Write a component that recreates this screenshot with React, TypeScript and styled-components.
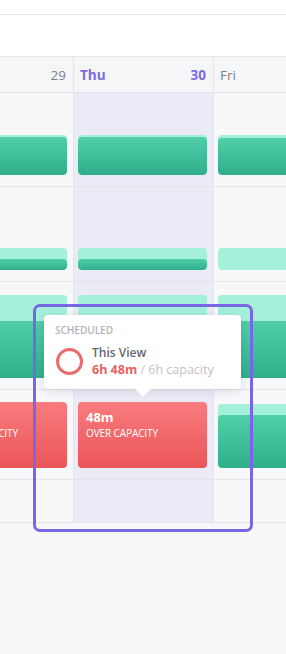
import React from "react";
import styled, { createGlobalStyle } from "styled-components";

const Global = createGlobalStyle`
  html, body { margin: 0; padding: 0; background: #f7f8fa; }
  body { font-family: "Open Sans", "Noto Sans", sans-serif; width: 286px; height: 654px; overflow: hidden; }
`;

const Page = styled.div`
  position: relative;
  width: 286px;
  height: 654px;
  overflow: hidden;
  background: #f7f8fa;
  display: flex;
  flex-direction: column;
`;

const TopStrip = styled.div`
  height: 14px;
  background: #fff;
  border-bottom: 1px solid #e6e7eb;
`;

const Toolbar = styled.div`
  height: 41px;
  background: #fff;
  border-bottom: 1px solid #e6e7eb;
`;

const Grid = styled.div`
  display: grid;
  grid-template-columns: repeat(3, 140px);
  margin-left: -66px;
  width: 420px;
`;

const Cell = styled.div<{ $today?: boolean; $h: number }>`
  box-sizing: border-box;
  height: ${(p) => p.$h}px;
  border-right: 1px solid #e4e5eb;
  border-bottom: 1px solid #e4e5eb;
  background: ${(p) => (p.$today ? "#ebebf7" : "#f7f8fa")};
  display: flex;
  flex-direction: column;
  justify-content: flex-end;
  padding: 0 6px 11px 4px;
`;

const HeadCell = styled.div<{ $today?: boolean }>`
  box-sizing: border-box;
  height: 36px;
  border-right: 1px solid #e4e5eb;
  border-bottom: 1px solid #e4e5eb;
  background: #f5f6f8;
  display: flex;
  align-items: center;
  justify-content: space-between;
  padding: 0 7px 0 6px;
  font-size: 13.5px;
  color: ${(p) => (p.$today ? "#7b6be6" : "#7d7f86")};
  font-weight: ${(p) => (p.$today ? 700 : 400)};
`;

const Bar = styled.div<{ $h: number }>`
  height: ${(p) => p.$h}px;
  border-radius: 4px;
  background: #a5f0db;
  display: flex;
  flex-direction: column;
  justify-content: flex-end;
  overflow: hidden;
`;

const Fill = styled.div<{ $h: number }>`
  height: ${(p) => p.$h}px;
  border-radius: 4px;
  background: linear-gradient(180deg, #50cfa9 0%, #2fae89 100%);
`;

const OverBar = styled.div<{ $h: number }>`
  height: ${(p) => p.$h}px;
  border-radius: 4px;
  background: linear-gradient(180deg, #f87c7e 0%, #ea5558 100%);
  color: #fff;
  padding: 6px 8px;
  box-sizing: border-box;
  display: flex;
  flex-direction: column;
  white-space: nowrap;
`;

const OverTitle = styled.div`
  font-size: 13px;
  font-weight: 700;
  line-height: 18px;
`;

const OverSub = styled.div`
  font-size: 10px;
  line-height: 14px;
  letter-spacing: -0.1px;
`;

const Tooltip = styled.div`
  position: absolute;
  left: 44px;
  top: 315px;
  width: 197px;
  height: 74px;
  box-sizing: border-box;
  background: #fff;
  border-radius: 4px;
  box-shadow: 0 2px 10px rgba(40, 40, 70, 0.14);
  padding: 8px 11px;
  &::after {
    content: "";
    position: absolute;
    left: 91px;
    bottom: -8px;
    border-left: 8px solid transparent;
    border-right: 8px solid transparent;
    border-top: 8px solid #fff;
  }
`;

const TipLabel = styled.div`
  font-size: 10px;
  font-weight: 600;
  color: #b2b3ba;
  line-height: 14px;
`;

const TipRow = styled.div`
  display: flex;
  align-items: center;
  gap: 9px;
  margin-top: 7px;
`;

const Ring = styled.div`
  width: 27px;
  height: 27px;
  box-sizing: border-box;
  border: 3px solid #ec6a6c;
  border-radius: 50%;
  margin-left: 1px;
  flex: none;
`;

const TipText = styled.div`
  display: flex;
  flex-direction: column;
`;

const TipName = styled.div`
  font-size: 12px;
  font-weight: 600;
  color: #66676e;
  line-height: 17px;
`;

const TipValue = styled.div`
  font-size: 12.5px;
  line-height: 17px;
  color: #c2c3c9;
  white-space: nowrap;
  b { color: #ea6163; font-weight: 700; }
`;

const Outline = styled.div`
  position: absolute;
  left: 33px;
  top: 304px;
  width: 220px;
  height: 228px;
  box-sizing: border-box;
  border: 3px solid #7767e3;
  border-radius: 7px;
  pointer-events: none;
`;

type Block =
  | { kind: "cap"; h: number; fill: number }
  | { kind: "over"; h: number }
  | { kind: "none" };

const rows: { h: number; cells: Block[] }[] = [
  { h: 94, cells: [{ kind: "cap", h: 40, fill: 38 }, { kind: "cap", h: 40, fill: 38 }, { kind: "cap", h: 40, fill: 37 }] },
  { h: 95, cells: [{ kind: "cap", h: 22, fill: 11 }, { kind: "cap", h: 22, fill: 11 }, { kind: "cap", h: 22, fill: 0 }] },
  { h: 108, cells: [{ kind: "cap", h: 83, fill: 57 }, { kind: "cap", h: 83, fill: 57 }, { kind: "cap", h: 83, fill: 57 }] },
  { h: 90, cells: [{ kind: "over", h: 66 }, { kind: "over", h: 66 }, { kind: "cap", h: 64, fill: 53 }] },
  { h: 43, cells: [{ kind: "none" }, { kind: "none" }, { kind: "none" }] },
];

const renderBlock = (b: Block) => {
  if (b.kind === "cap")
    return (
      <Bar $h={b.h}>
        {b.fill > 0 && <Fill $h={b.fill} />}
      </Bar>
    );
  if (b.kind === "over")
    return (
      <OverBar $h={b.h}>
        <OverTitle>48m</OverTitle>
        <OverSub>OVER CAPACITY</OverSub>
      </OverBar>
    );
  return null;
};

export default function App() {
  return (
    <Page>
      <Global />
      <TopStrip />
      <Toolbar />
      <Grid>
        <HeadCell>
          <span>Wed</span>
          <span>29</span>
        </HeadCell>
        <HeadCell $today>
          <span>Thu</span>
          <span>30</span>
        </HeadCell>
        <HeadCell>
          <span>Fri</span>
          <span>1</span>
        </HeadCell>
        {rows.map((r, ri) =>
          r.cells.map((c, ci) => (
            <Cell key={`${ri}-${ci}`} $h={r.h} $today={ci === 1}>
              {renderBlock(c)}
            </Cell>
          ))
        )}
      </Grid>
      <Tooltip>
        <TipLabel>SCHEDULED</TipLabel>
        <TipRow>
          <Ring />
          <TipText>
            <TipName>This View</TipName>
            <TipValue>
              <b>6h 48m</b> / 6h capacity
            </TipValue>
          </TipText>
        </TipRow>
      </Tooltip>
      <Outline />
    </Page>
  );
}
